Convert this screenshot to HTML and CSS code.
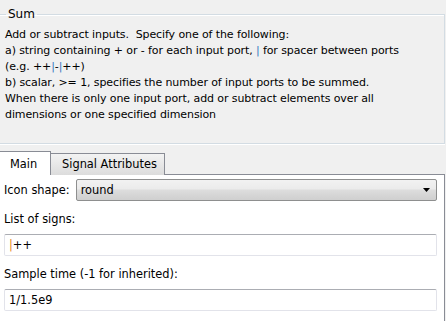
FILE: index.html
```html
<!DOCTYPE html>
<html>
<head>
<meta charset="utf-8">
<link rel="stylesheet" href="styles.css">
</head>
<body>
<fieldset class="group">
  <legend class="legend">Sum</legend>
  <p class="desc">Add or subtract inputs.&nbsp; Specify one of the following:<br>a) string containing + or - for each input port, <span class="bar">|</span> for spacer between ports<br>(e.g. ++<span class="bar">|</span>-<span class="bar">|</span>++)<br>b) scalar, &gt;= 1, specifies the number of input ports to be summed.<br>When there is only one input port, add or subtract elements over all<br>dimensions or one specified dimension</p>
</fieldset>
<div class="tabs">
  <div class="tab tab-active">Main</div>
  <div class="tab tab-inactive">Signal Attributes</div>
  <div class="tab-fill"></div>
</div>
<div class="panel">
  <div class="row">
    <span class="label">Icon shape:</span>
    <div class="select">
      <span>round</span>
      <svg class="arrow" width="7" height="4" viewBox="0 0 7 4"><path d="M0 0H7L3.5 4Z" fill="#000"/></svg>
    </div>
  </div>
  <div class="label block first">List of signs:</div>
  <div class="input"><span class="obar">|</span>++</div>
  <div class="label block">Sample time (-1 for inherited):</div>
  <div class="input">1/1.5e9</div>
</div>
</body>
</html>
```
FILE: styles.css
```css
html, body {
  margin: 0;
  padding: 0;
  background: #f0f0f0;
  font-family: "DejaVu Sans", Verdana, sans-serif;
  font-size: 11px;
  color: #000;
  width: 446px;
  height: 321px;
  overflow: hidden;
}
.group {
  margin: 7px 1px 0 -2px;
  padding: 0 0 0 8px;
  border: none;
  border-top: 1px solid #d3dce3;
  border-right: 1px solid #d3dce3;
  border-bottom: 1px solid #d3dce3;
  box-shadow: inset 0 1px 0 #fff, 0 1px 0 #fff;
  height: 137px;
  box-sizing: border-box;
}
.legend {
  padding: 0 2px;
  margin-left: 0;
  font-size: 12px;
  line-height: 14px;
}
.desc {
  margin: 6px 0 0 -1px;
  line-height: 16px;
  letter-spacing: -0.1px;
  white-space: nowrap;
}
.bar { color: #3a78c0; }
.obar { color: #e8861a; }
.tabs {
  display: flex;
  align-items: flex-end;
  margin-top: 7px;
  height: 24px;
}
.tab {
  box-sizing: border-box;
  border: 1px solid #898c95;
  border-bottom: none;
  font-size: 11.4px;
}
.tab-active {
  width: 51px;
  height: 24px;
  background: #fff;
  border-left: none;
  padding: 5px 0 0 10px;
}
.tab-inactive {
  width: 115px;
  height: 22px;
  margin-left: -1px;
  background: linear-gradient(#f3f3f3, #dcdcdc);
  padding: 3px 0 0 11px;
}
.tab-fill {
  flex: 1;
  height: 0;
  border-bottom: 1px solid #898c95;
  border-right: 1px solid #898c95;
  margin-right: 1px;
}
.panel {
  background: #fff;
  border-right: 1px solid #898c95;
  margin-right: 1px;
  height: 150px;
  padding: 4px 7px 0 4px;
  box-sizing: border-box;
}
.row {
  display: flex;
  align-items: center;
  gap: 6px;
}
.label { font-size: 11.4px; line-height: 16px; }
.select {
  flex: 1;
  height: 22px;
  box-sizing: border-box;
  border: 1px solid #8e8f8f;
  border-radius: 2px;
  background: linear-gradient(#f2f2f2 0%, #ebebeb 45%, #dddddd 50%, #cfcfcf 100%);
  display: flex;
  align-items: center;
  justify-content: space-between;
  padding: 0 6px 0 4px;
  font-size: 11.4px;
}
.arrow { display: block; }
.block { margin-top: 9px; }
.block.first { margin-top: 10px; }
.input {
  height: 22px;
  box-sizing: border-box;
  border: 1px solid #e2e3ea;
  border-top-color: #abadb3;
  border-radius: 2px;
  padding: 3px 4px 0 4px;
  font-size: 11.4px;
  line-height: 15px;
  background: #fff;
}
.block + .input { margin-top: 7px; }
.input + .block { margin-top: 10px; }
```
